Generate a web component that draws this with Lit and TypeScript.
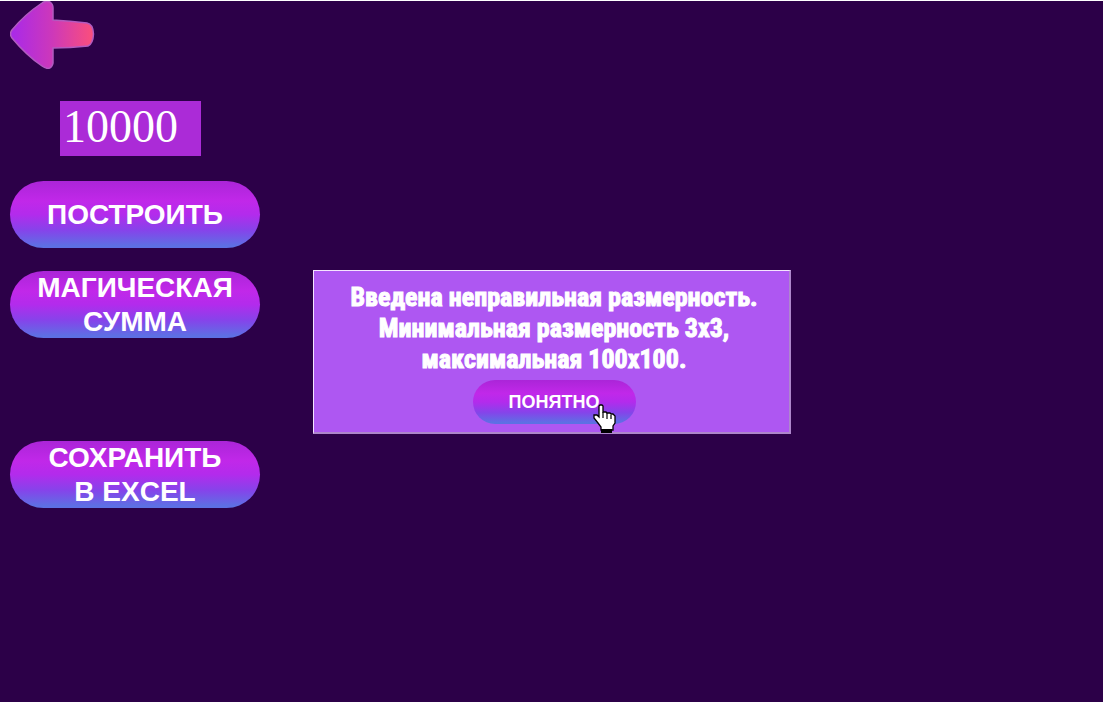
import { LitElement, html, css } from "lit";
import { customElement, state } from "lit/decorators.js";

@customElement("app-root")
export class AppRoot extends LitElement {
  static styles = css`
    :host {
      display: block;
      min-height: 100vh;
      box-sizing: border-box;
      border-top: 1px solid #ffffff;
      background: #2c0048;
      color: #ffffff;
      font-family: "Liberation Sans", sans-serif;
    }
    button {
      border: 0;
      padding: 0;
      color: inherit;
      cursor: pointer;
      font: inherit;
    }
    .panel {
      display: flex;
      flex-direction: column;
      align-items: flex-start;
      max-width: 250px;
      padding: 0 10px;
    }
    .back {
      background: none;
      display: block;
      margin-bottom: 32px;
    }
    .back svg,
    .pointer {
      display: block;
    }
    .size {
      box-sizing: border-box;
      width: 141px;
      height: 55px;
      margin: 0 0 25px 50px;
      padding: 0 0 5px 3px;
      border: 0;
      border-radius: 0;
      outline: none;
      background: #ab2bd7;
      color: #ffffff;
      font: 46px "Liberation Serif", serif;
    }
    .pill {
      width: 100%;
      height: 67px;
      border-radius: 34px;
      background: linear-gradient(#ab25d8 0%, #c128e9 30%, #b32bec 50%, #8544ea 74%, #5d70e4 97%);
      font-size: 28px;
      font-weight: 700;
      line-height: 34px;
    }
    .actions {
      display: flex;
      flex-direction: column;
      gap: 23px;
      width: 100%;
      margin-bottom: 103px;
    }
    .overlay {
      position: absolute;
      inset: 0;
      display: flex;
      align-items: center;
      justify-content: center;
      padding-top: 2px;
      pointer-events: none;
    }
    .message {
      box-sizing: border-box;
      width: 478px;
      max-width: 100%;
      padding: 11px 12px 8px 18px;
      border: 2px solid;
      border-color: #f5e4ff #ae86cc #ae86cc #f5e4ff;
      border-width: 1px 2px 2px 1px;
      background: #ae57f2;
      display: flex;
      flex-direction: column;
      align-items: center;
      gap: 5px;
      pointer-events: auto;
    }
    .message p {
      margin: 0;
      font-family: Impact, "Liberation Sans Narrow", "Roboto Condensed", Roboto, sans-serif;
      font-size: 26px;
      font-weight: 700;
      line-height: 31px;
      text-align: center;
      white-space: nowrap;
      -webkit-text-stroke: 1px #ffffff;
    }
    .confirm {
      position: relative;
      width: 163px;
      height: 44px;
      font-size: 18px;
      line-height: 22px;
    }
    .pointer {
      position: absolute;
      right: 20px;
      bottom: -10px;
    }
  `;

  @state() private open = true;

  private close() {
    this.open = false;
  }

  render() {
    return html`
      <main class="panel">
        <button class="back" aria-label="Назад">
          <svg width="85" height="68" viewBox="0 0 85 68">
            <defs>
              <linearGradient id="arrow">
                <stop offset="0" stop-color="#a829ea" />
                <stop offset="0.5" stop-color="#cd38ba" />
                <stop offset="1" stop-color="#fb4f7b" />
              </linearGradient>
            </defs>
            <path
              d="M2 29Q14 14 32 2Q36-1 40 1Q43 3 43 7V19Q60 20 77 22Q83 23 83.500 33Q83 43 78 45Q60 47 43 47V62Q42 67 38 67.500Q35 67 32 65Q16 54 2 37Q-1 33 2 29Z"
              fill="url(#arrow)"
              stroke="#b25ac0"
              stroke-width="1.500"
            />
          </svg>
        </button>
        <input class="size" type="text" aria-label="Размерность" .value=${"10000"} />
        <div class="actions">
          <button class="pill">ПОСТРОИТЬ</button>
          <button class="pill">МАГИЧЕСКАЯ<br />СУММА</button>
        </div>
        <button class="pill">СОХРАНИТЬ<br />В EXCEL</button>
      </main>
      ${this.open
        ? html`<div class="overlay">
            <section class="message" role="alertdialog" aria-labelledby="warning">
              <p id="warning">
                Введена неправильная размерность.<br />Минимальная размерность 3х3,<br />максимальная 100х100.
              </p>
              <button class="pill confirm" @click=${this.close}>
                ПОНЯТНО
                <svg class="pointer" width="23" height="30" viewBox="0 0 23 30" aria-hidden="true">
                  <path
                    d="M7 1H9L10 2V8H13L14 9H17L18 10H20L22 12V19L20 22V26H8V23L5 19L1 14V11H4L6 13V2Z"
                    fill="#fff"
                    stroke="#000"
                    stroke-width="1.300"
                  />
                  <path d="M10 8V14M14 9V15M18 11V15" stroke="#000" stroke-width="1.200" />
                  <path d="M8 25H19V29H8Z" />
                </svg>
              </button>
            </section>
          </div>`
        : ""}
    `;
  }
}
